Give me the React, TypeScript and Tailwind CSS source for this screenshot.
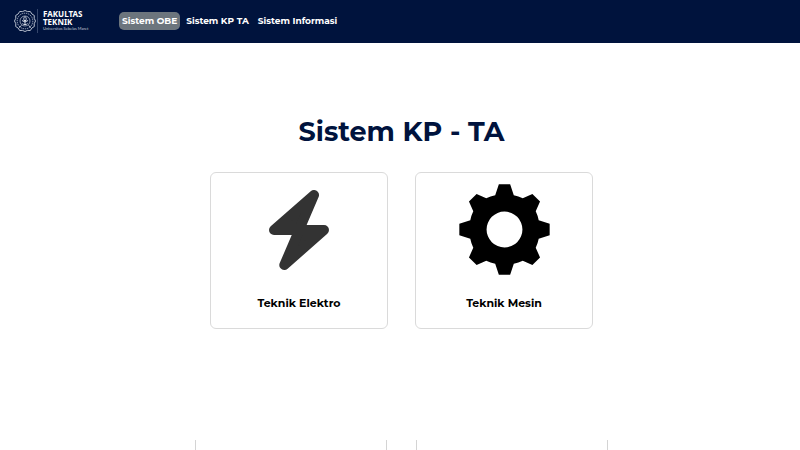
import React from "react";

const navItems = [
  { label: "Sistem OBE", active: true },
  { label: "Sistem KP TA", active: false },
  { label: "Sistem Informasi", active: false },
];

function Emblem() {
  return (
    <svg viewBox="0 0 24 24" className="size-6 shrink-0" fill="none" stroke="#e3e8f0" aria-hidden="true">
      <path
        d="M12 1.500 14.500 2.600 17.300 2.500 18.800 4.900 21.300 6.500 21.200 9.300 22.500 12 21.200 14.700 21.300 17.500 18.800 19.100 17.300 21.500 14.500 21.400 12 22.500 9.500 21.400 6.700 21.500 5.200 19.100 2.700 17.500 2.800 14.700 1.500 12 2.800 9.300 2.700 6.500 5.200 4.900 6.700 2.500 9.500 2.600Z"
        strokeWidth="0.8"
      />
      <circle cx="12" cy="12" r="7.8" strokeWidth="0.7" strokeDasharray="1.4 0.8" />
      <circle cx="12" cy="12" r="5" strokeWidth="0.6" />
      <path
        d="M12 7.500c-2 2-1 2.500-1 4h2c0-1.500 1-2 -1-4zM9 11.500l3 1.500 3-1.500M12 11v5M9.500 14.500c1 1.500 4 1.500 5 0M6 18.500l2.500-2M18 18.500l-2.500-2"
        strokeWidth="0.9"
      />
    </svg>
  );
}

function Logo() {
  return (
    <a href="#" className="flex w-[74px] items-center text-white">
      <Emblem />
      <span className="h-6 w-px shrink-0 bg-[#35466b]" />
      <span className="ml-[5px] flex flex-col font-['Noto_Sans',sans-serif] whitespace-nowrap">
        <span className="text-[8px] leading-[8px] font-bold">FAKULTAS</span>
        <span className="text-[8px] leading-[8px] font-bold">TEKNIK</span>
        <span className="font-['Lato',sans-serif] text-[4px] leading-[6px] text-[#c3cad8]">
          Universitas Sebelas Maret
        </span>
      </span>
    </a>
  );
}

function BoltIcon() {
  return (
    <svg viewBox="0 0 180 240" className="h-20 w-[60px]" aria-hidden="true">
      <path
        d="M135 15 90 120H165L46 225 91 120H15Z"
        fill="#333333"
        stroke="#333333"
        strokeWidth="30"
        strokeLinejoin="round"
      />
    </svg>
  );
}

function GearIcon() {
  return (
    <svg viewBox="-137 -137 274 274" className="size-[91px]" aria-hidden="true">
      <path
        fillRule="evenodd"
        d="M-17-136H17L28-103A107 107 0 0 1 55-94L84-107 107-84 94-55A107 107 0 0 1 103-28L136-17V17L103 28A107 107 0 0 1 94 55L107 84 84 107 55 94A107 107 0 0 1 28 103L17 136H-17L-28 103A107 107 0 0 1-55 94L-84 107-107 84-94 55A107 107 0 0 1-103 28L-136 17V-17L-103-28A107 107 0 0 1-94-55L-107-84-84-107-55-94A107 107 0 0 1-28-103ZM54 0A54 54 0 1 0-54 0A54 54 0 1 0 54 0Z"
      />
    </svg>
  );
}

function SystemCard({ title, icon }: { title: string; icon: React.ReactNode }) {
  return (
    <a
      href="#"
      className="flex w-[178px] flex-col items-center rounded-md border border-[#dadada] bg-white pt-[11px] pb-[15px] text-black"
    >
      <span className="flex h-[91px] items-center justify-center">{icon}</span>
      <span className="mt-[18px] text-[11px] leading-5 font-bold">{title}</span>
    </a>
  );
}

export default function App() {
  return (
    <div className="h-screen overflow-hidden bg-white font-['Montserrat','Inter',sans-serif]">
      <header className="flex h-[43px] items-center bg-[#00133d] pb-px pl-[13px]">
        <Logo />
        <nav className="ml-8 flex items-center gap-[3px]">
          {navItems.map((item) => (
            <a
              key={item.label}
              href="#"
              className={
                "rounded-[5px] px-[3px] text-[9px] leading-[18px] font-bold whitespace-nowrap text-white " +
                (item.active ? "bg-[#6c757d]" : "")
              }
            >
              {item.label}
            </a>
          ))}
        </nav>
      </header>
      <main className="pt-[69px] pl-[3px]">
        <h1 className="text-center text-[27px] leading-10 font-bold text-[#00133d]">Sistem KP - TA</h1>
        <section className="mt-5 flex justify-center gap-[27px]">
          <SystemCard title="Teknik Elektro" icon={<BoltIcon />} />
          <SystemCard title="Teknik Mesin" icon={<GearIcon />} />
        </section>
        <section className="mt-[111px] flex justify-center gap-[29px]">
          <div className="h-40 w-48 border-x border-[#d4d4d4]" />
          <div className="h-40 w-48 border-x border-[#d4d4d4]" />
        </section>
      </main>
    </div>
  );
}
